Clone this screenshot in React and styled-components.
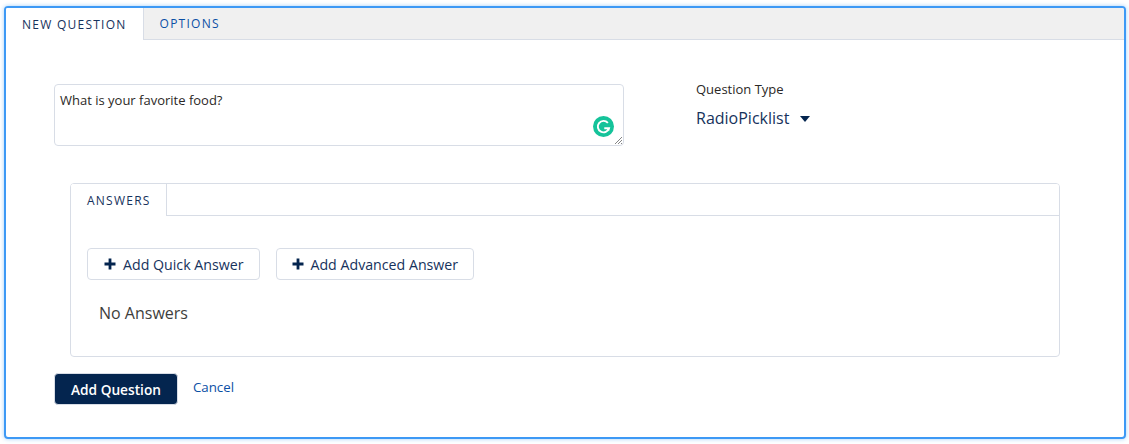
import React from 'react';
import styled, { createGlobalStyle } from 'styled-components';

const Global = createGlobalStyle`
  html, body {
    margin: 0;
    padding: 0;
    background: #fff;
    font-family: "Open Sans", "Noto Sans", sans-serif;
    color: #16325c;
  }
`;

const Page = styled.div`
  width: 1129px;
  height: 444px;
  padding: 6px 3px 5px 4px;
  box-sizing: border-box;
`;

const Frame = styled.div`
  height: 100%;
  box-sizing: border-box;
  border: 2px solid #3d99f5;
  border-radius: 4px;
  box-shadow: 0 0 4px rgba(21, 137, 238, 0.4);
  overflow: hidden;
  display: flex;
  flex-direction: column;
`;

const TabBar = styled.div`
  display: flex;
  height: 32px;
  box-sizing: border-box;
  flex-shrink: 0;
  background: ${(props) => (props.$plain ? '#fff' : '#f0f0f0')};
  border-bottom: 1px solid #d8dde6;
`;

const Tab = styled.div`
  display: flex;
  align-items: center;
  box-sizing: border-box;
  height: ${(props) => (props.$active ? '32px' : '31px')};
  padding: 0 ${(props) => (props.$tight ? '15px' : '16px')} 0 16px;
  font-size: 12px;
  letter-spacing: 1.25px;
  text-transform: uppercase;
  color: ${(props) => (props.$active ? '#16325c' : '#0b4fa5')};
  background: ${(props) => (props.$active ? '#fff' : 'transparent')};
  border-right: ${(props) => (props.$active ? '1px solid #d8dde6' : 'none')};
`;

const Body = styled.div`
  flex: 1;
  padding: 44px 64px 0 48px;
  display: flex;
  flex-direction: column;
`;

const QuestionRow = styled.div`
  display: flex;
  align-items: flex-start;
`;

const TextBox = styled.div`
  position: relative;
  width: 570px;
  height: 62px;
  box-sizing: border-box;
  border: 1px solid #d8dde6;
  border-radius: 4px;
  padding: 6px 5px;
  font-size: 13px;
  line-height: 18px;
  color: #2b2826;
`;

const GrammarBadge = styled.svg`
  position: absolute;
  right: 9px;
  bottom: 8px;
  width: 21px;
  height: 21px;
`;

const ResizeGrip = styled.svg`
  position: absolute;
  right: 0;
  bottom: 0;
  width: 9px;
  height: 9px;
`;

const TypeField = styled.div`
  margin-left: 72px;
  display: flex;
  flex-direction: column;
`;

const FieldLabel = styled.div`
  font-size: 13px;
  line-height: 18px;
  margin-top: -4px;
  color: #2b2826;
`;

const Picklist = styled.div`
  display: flex;
  align-items: center;
  margin-top: 10px;
  font-size: 16px;
  line-height: 20px;
  color: #16325c;
`;

const Caret = styled.span`
  width: 0;
  height: 0;
  margin-left: 11px;
  margin-top: 2px;
  border-left: 5.5px solid transparent;
  border-right: 5.5px solid transparent;
  border-top: 6px solid #04254f;
`;

const AnswersCard = styled.div`
  margin: 37px 0 0 16px;
  height: 174px;
  box-sizing: border-box;
  border: 1px solid #d8dde6;
  border-radius: 4px;
  overflow: hidden;
`;

const CardContent = styled.div`
  padding: 32px 16px 0;
`;

const ButtonRow = styled.div`
  display: flex;
  gap: 16px;
`;

const OutlineButton = styled.button`
  display: flex;
  align-items: center;
  gap: ${(props) => (props.$compact ? '6px' : '7px')};
  height: 32px;
  padding: 0 ${(props) => (props.$compact ? '15px' : '16px')};
  box-sizing: border-box;
  background: #fff;
  border: 1px solid #d8dde6;
  border-radius: 4px;
  font: inherit;
  font-size: 14.2px;
  color: #16325c;
`;

const PlusIcon = styled.svg`
  width: 12px;
  height: 12px;
`;

const EmptyText = styled.div`
  margin: 23px 0 0 12px;
  font-size: 16px;
  line-height: 20px;
  color: #3e3e3c;
`;

const Actions = styled.div`
  display: flex;
  align-items: center;
  margin-top: 16px;
  gap: 15px;
`;

const PrimaryButton = styled.button`
  height: 32px;
  padding: 0 16px;
  background: #04254f;
  border: 1px solid #d8dde6;
  border-radius: 4px;
  color: #fff;
  font: inherit;
  font-size: 13.7px;
  font-weight: 600;
`;

const CancelLink = styled.a`
  font-size: 13.3px;
  color: #0b4fa5;
  margin-top: -5px;
`;

const Plus = () => (
  <PlusIcon viewBox="0 0 12 12">
    <path d="M6 .5v11M.5 6h11" stroke="#04254f" strokeWidth="2.8" />
  </PlusIcon>
);

export default function App() {
  return (
    <>
      <Global />
      <Page>
        <Frame>
          <TabBar>
            <Tab $active>New Question</Tab>
            <Tab>Options</Tab>
          </TabBar>
          <Body>
            <QuestionRow>
              <TextBox>
                What is your favorite food?
                <GrammarBadge viewBox="0 0 22 22">
                  <circle cx="11" cy="11" r="11" fill="#15c39a" />
                  <path d="M15.6 7.2A6 6 0 1 0 16.8 12.8H11.8" fill="none" stroke="#fff" strokeWidth="2" />
                  <path d="M13.5 13l3.6 2.8v-3.6z" fill="#fff" />
                </GrammarBadge>
                <ResizeGrip viewBox="0 0 9 9">
                  <path d="M1 8L8 1M4 8L8 4M7 8l1-1" stroke="#666" strokeWidth="0.8" />
                </ResizeGrip>
              </TextBox>
              <TypeField>
                <FieldLabel>Question Type</FieldLabel>
                <Picklist>
                  RadioPicklist
                  <Caret />
                </Picklist>
              </TypeField>
            </QuestionRow>
            <AnswersCard>
              <TabBar $plain>
                <Tab $active $tight>Answers</Tab>
              </TabBar>
              <CardContent>
                <ButtonRow>
                  <OutlineButton>
                    <Plus />
                    Add Quick Answer
                  </OutlineButton>
                  <OutlineButton $compact>
                    <Plus />
                    Add Advanced Answer
                  </OutlineButton>
                </ButtonRow>
                <EmptyText>No Answers</EmptyText>
              </CardContent>
            </AnswersCard>
            <Actions>
              <PrimaryButton>Add Question</PrimaryButton>
              <CancelLink>Cancel</CancelLink>
            </Actions>
          </Body>
        </Frame>
      </Page>
    </>
  );
}
